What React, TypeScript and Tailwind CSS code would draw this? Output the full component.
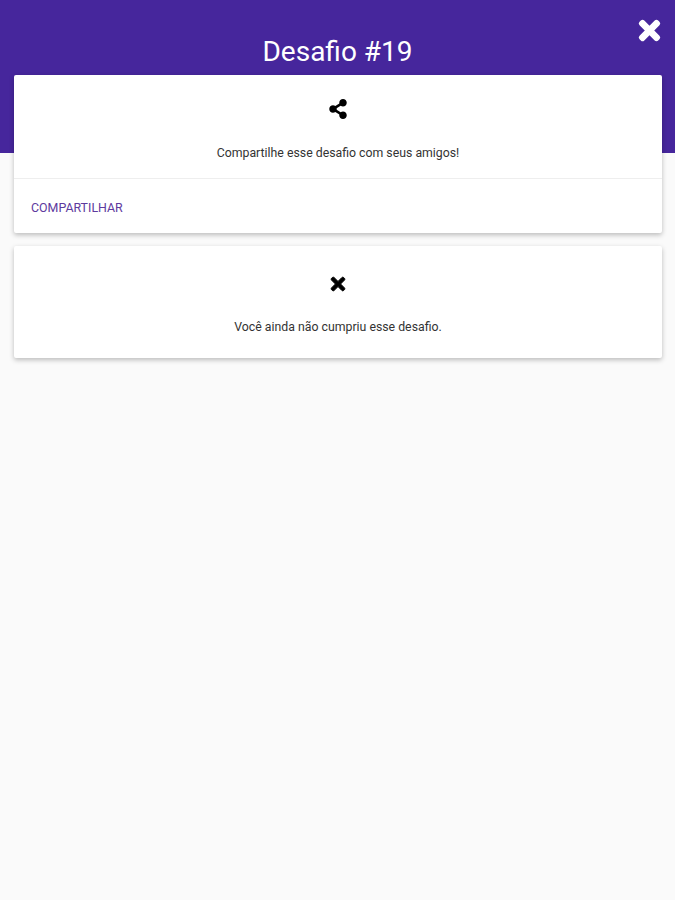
import { FaShareAlt, FaTimes } from "react-icons/fa";

const font = { fontFamily: "Roboto, sans-serif" };

export default function App() {
  return (
    <div className="min-h-[900px] bg-[#fafafa]" style={font}>
      {/* Header */}
      <header className="relative h-[153px] bg-[#46269c] pt-[34px] text-center">
        <h1 className="text-[28px] leading-[36px] font-normal text-white">Desafio #19</h1>
        <button className="absolute top-[16px] right-[11px] text-white">
          <FaTimes size={29} className="[stroke-width:24px]" />
        </button>
      </header>

      <main className="-mt-[78px] relative flex flex-col gap-[13px] pl-[14px] pr-[13px]">
        {/* Share card */}
        <section className="rounded-[2px] bg-white shadow-[0_2px_5px_rgba(0,0,0,0.25)]">
          <div className="flex h-[104px] flex-col items-center border-b border-[#eeeeee] pt-[24px]">
            <FaShareAlt size={20} className="text-black" />
            <p className="mt-[26px] text-[12.3px] leading-[16px] text-[#333333]">
              Compartilhe esse desafio com seus amigos!
            </p>
          </div>
          <div className="flex h-[54px] items-center pl-[17px] pt-[3px]">
            <button className="text-[12.4px] leading-[16px] text-[#5e3a9e]">COMPARTILHAR</button>
          </div>
        </section>

        {/* Status card */}
        <section className="flex h-[112px] flex-col items-center rounded-[2px] bg-white pt-[28px] shadow-[0_2px_5px_rgba(0,0,0,0.25)]">
          <FaTimes size={20} className="text-black [stroke-width:24px]" />
          <p className="mt-[25px] text-[12.3px] leading-[16px] text-[#333333]">
            Você ainda não cumpriu esse desafio.
          </p>
        </section>
      </main>
    </div>
  );
}
